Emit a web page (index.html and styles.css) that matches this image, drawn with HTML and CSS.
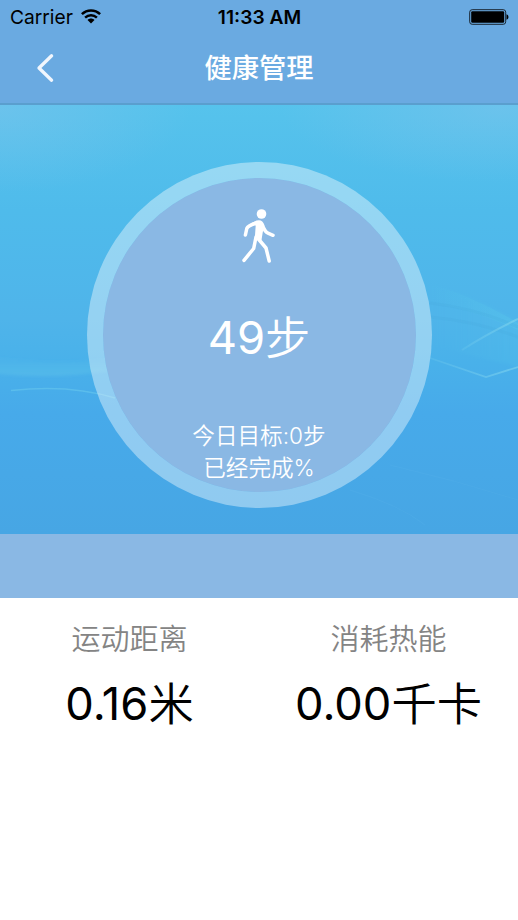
FILE: index.html
```html
<!DOCTYPE html>
<html lang="zh-CN">
<head>
<meta charset="utf-8">
<title>健康管理</title>
<link rel="stylesheet" href="styles.css">
</head>
<body>
<header class="top">
  <div class="status">
    <div class="carrier"><span>Carrier</span>
      <svg class="wifi" width="20" height="15" viewBox="0 0 20 15"><g fill="none" stroke="#000" stroke-width="2.5"><path d="M.9 5.2C6 .2 14 .2 19.1 5.2"/><path d="M4.1 8.6C7.5 5.500 12.500 5.500 15.900 8.600"/></g><path d="M6.500 11c1.900-2 5.100-2 7 0L10 14.400z"/></svg>
    </div>
    <time class="time">11:33 AM</time>
    <svg class="battery" width="40" height="16" viewBox="0 0 40 16"><rect x=".7" y=".7" width="36" height="14.600" rx="2.500" fill="none" stroke="#18242f" stroke-width="1"/><rect x="2.200" y="2.200" width="33" height="11.600" rx="1.200"/><path d="M37.500 5.200c2.600.8 2.600 4.800 0 5.600z"/></svg>
  </div>
  <nav class="nav">
    <svg class="back" width="18" height="30" viewBox="0 0 18 30"><path d="M15.600 2.800 3 15l12.600 12.200" fill="none" stroke="#f0f6fd" stroke-width="3.300" stroke-linecap="round" stroke-linejoin="round"/></svg>
    <h1 class="title">健康管理</h1>
    <span></span>
  </nav>
</header>
<main>
  <section class="hero">
    <svg class="waves" width="518" height="429" viewBox="0 105 518 429">
      <defs>
        <linearGradient id="sky" x1="0" y1="0" x2="0" y2="1"><stop offset="0" stop-color="#56c3ec"/><stop offset=".25" stop-color="#4fbbeb"/><stop offset=".5" stop-color="#4fb4ea"/><stop offset=".6" stop-color="#49b1ea"/><stop offset=".72" stop-color="#47aaea"/><stop offset="1" stop-color="#47a6e4"/></linearGradient>
        <radialGradient id="glow"><stop offset="0" stop-color="#80c3ec" stop-opacity=".5"/><stop offset="1" stop-color="#80c3ec" stop-opacity="0"/></radialGradient>
        <linearGradient id="fan" x1="0" y1="0" x2="1" y2="0"><stop offset="0" stop-color="#5bd0ec" stop-opacity="0"/><stop offset="1" stop-color="#5bd0ec" stop-opacity=".5"/></linearGradient>
        <linearGradient id="ray" x1="0" y1="0" x2="1" y2="0"><stop offset="0" stop-color="#8bdcf0" stop-opacity=".15"/><stop offset="1" stop-color="#8bdcf0" stop-opacity=".5"/></linearGradient>
        <linearGradient id="mist" x1="0" y1="0" x2="0" y2="1"><stop offset="0" stop-color="#60c5e9" stop-opacity="0"/><stop offset="1" stop-color="#60c5e9" stop-opacity=".45"/></linearGradient>
        <filter id="soft" x="-10%" y="-30%" width="120%" height="160%"><feGaussianBlur stdDeviation="1.500"/></filter>
      </defs>
      <rect y="104" width="518" height="430" fill="url(#sky)"/>
      <ellipse cx="0" cy="108" rx="190" ry="85" fill="url(#glow)"/>
      <ellipse cx="500" cy="108" rx="220" ry="75" fill="url(#glow)"/>
      <path d="M-9 356Q50 366 110 359V371Q50 380-9 373Z" fill="url(#mist)" filter="url(#soft)"/>
      <path d="M11 390.500Q70 384 115 398" fill="none" stroke="#62c3ec" stroke-width="1.600" opacity=".7"/>
      <path d="M425 282Q475 294 528 328V369Q475 357 425 344Z" fill="url(#fan)" opacity=".3" filter="url(#soft)"/>
      <path d="M430 284Q475 297 518 323V330Q475 310 430 303Z" fill="url(#fan)" opacity=".45"/>
      <path d="M430 303Q475 308 518 327M430 317Q475 321 518 337" fill="none" stroke="#46aadf" stroke-width="3" opacity=".25"/>
      <path d="M462 350Q487 334 518 319" fill="none" stroke="url(#ray)" stroke-width="2"/>
      <path d="M430 358L486 377L518 367" fill="none" stroke="url(#ray)" stroke-width="1.700"/>
      <path d="M390 465Q455 480 518 500M350 490Q400 505 425 525" fill="none" stroke="#6dbbec" opacity=".12"/>
    </svg>
    <div class="ring">
      <svg class="walker" width="36" height="56" viewBox="0 0 36 56"><circle cx="21.500" cy="6" r="4.800" fill="#fff"/><path d="M15 15.500Q8 17.500 6.800 20.500L5.400 27M22.500 17.500Q25 24 28 25.200L33 27.300M16 29l-2.300 11.500L4 52.300M18 30.500l8 9.500 3.200 13" fill="none" stroke="#fff" stroke-width="3.500" stroke-linecap="round" stroke-linejoin="round"/><path d="M10.500 15.500 16.500 12.600Q22.500 10.800 24.300 17l-1.500 7-1.300 8-6.800-.400 1-14z" fill="#fff"/></svg>
      <p class="steps"><span class="num">49</span>步</p>
      <p class="goal">今日目标:<span class="num">0</span>步</p>
      <p class="done">已经完成<span class="num">%</span></p>
    </div>
  </section>
  <div class="band"></div>
  <section class="stats">
    <div class="stat"><h2>运动距离</h2><p><span class="num">0.16</span>米</p></div>
    <div class="stat"><h2>消耗热能</h2><p><span class="num">0.00</span>千卡</p></div>
  </section>
</main>
</body>
</html>
```
FILE: styles.css
```css
* { box-sizing: border-box; }
body { margin: 0; width: 518px; height: 920px; background: #fff; font-family: Inter, "Noto Sans CJK SC", sans-serif; overflow: hidden; }
h1, h2, p { margin: 0; font-weight: 400; }
svg { display: block; }
.top { height: 105px; background: #6aaae1; border-bottom: 2px solid #5a9fce; }
.status { height: 33px; padding: 0 9px 0 10px; display: grid; grid-template-columns: 1fr auto 1fr; align-items: center; font-size: 19.2px; }
.carrier { display: flex; align-items: center; gap: 8px; }
.wifi { margin-top: -1px; }
.time { font-weight: 600; }
.battery { justify-self: end; }
.nav { height: 70px; display: grid; grid-template-columns: 1fr auto 1fr; align-items: center; }
.back { margin-left: 36px; }
.title { color: #fff; font-size: 27.3px; line-height: 40px; font-weight: 500; padding-top: 2px; }
.hero { height: 429px; display: grid; }
.waves, .ring { grid-area: 1 / 1; }
.ring { width: 345px; height: 346px; margin: 57px auto 0; border: 16px solid rgba(255, 255, 255, .4); border-radius: 50%; background: #8ab8e4; background-clip: padding-box; color: #fff; display: flex; flex-direction: column; align-items: center; }
.walker { margin: 30px 0 0 -2px; }
.steps { font-size: 45.3px; line-height: 60px; margin-top: 45px; font-weight: 350; }
.goal, .done { height: 32px; font-size: 22.6px; line-height: 32px; font-weight: 350; }
.goal { margin-top: 51px; }
.num { font-weight: 400; }
.goal .num, .done .num { font-weight: 300; }
.band { height: 64px; background: #8ab8e4; }
.stats { display: grid; grid-template-columns: 1fr 1fr; text-align: center; }
.stat h2 { margin-top: 21px; font-size: 29px; line-height: 42px; font-weight: 350; color: #848484; }
.stat p { margin-top: 14px; font-size: 45.3px; line-height: 60px; font-weight: 350; }
.steps .num, .stat .num { position: relative; top: -1px; }
```
